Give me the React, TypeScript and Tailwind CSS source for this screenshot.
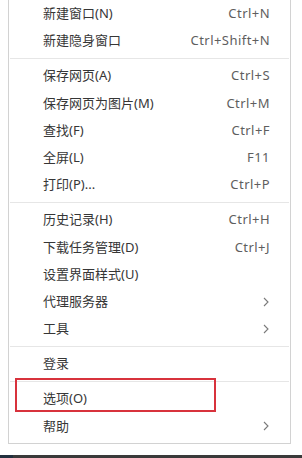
import React from "react";

type Item =
  | { type: "item"; label: string; shortcut?: string; sub?: boolean }
  | { type: "sep" };

const items: Item[] = [
  { type: "item", label: "新建窗口(N)", shortcut: "Ctrl+N" },
  { type: "item", label: "新建隐身窗口", shortcut: "Ctrl+Shift+N" },
  { type: "sep" },
  { type: "item", label: "保存网页(A)", shortcut: "Ctrl+S" },
  { type: "item", label: "保存网页为图片(M)", shortcut: "Ctrl+M" },
  { type: "item", label: "查找(F)", shortcut: "Ctrl+F" },
  { type: "item", label: "全屏(L)", shortcut: "F11" },
  { type: "item", label: "打印(P)...", shortcut: "Ctrl+P" },
  { type: "sep" },
  { type: "item", label: "历史记录(H)", shortcut: "Ctrl+H" },
  { type: "item", label: "下载任务管理(D)", shortcut: "Ctrl+J" },
  { type: "item", label: "设置界面样式(U)" },
  { type: "item", label: "代理服务器", sub: true },
  { type: "item", label: "工具", sub: true },
  { type: "sep" },
  { type: "item", label: "登录" },
  { type: "sep" },
  { type: "item", label: "选项(O)" },
  { type: "item", label: "帮助", sub: true },
];

function Chevron() {
  return (
    <svg width="6" height="10" viewBox="0 0 6 10" className="mr-[1px]">
      <path d="M1 1 L5 5 L1 9" fill="none" stroke="#7a7a7a" strokeWidth="1.1" />
    </svg>
  );
}

export default function App() {
  return (
    <div
      className="relative w-[302px] h-[458px] bg-white flex flex-col overflow-hidden"
      style={{ fontFamily: '"Noto Sans", "Noto Sans CJK SC", sans-serif' }}
    >
      <div className="ml-[8px] w-[283px] border-x border-b border-[#d2d2d2] pb-[3px]">
        {items.map((it, i) =>
          it.type === "sep" ? (
            <div key={i} className="h-[7.75px] flex items-center mx-[1px]">
              <div className="h-px w-full bg-[#e6e6e6]" />
            </div>
          ) : (
            <div
              key={i}
              className="h-[27.25px] flex items-center justify-between pl-[34px] pr-[20px] text-[13px] leading-none"
            >
              <span className="text-[#363636]">{it.label}</span>
              {it.shortcut && (
                <span className="text-[#5e5e5e] tracking-[0.45px]">{it.shortcut}</span>
              )}
              {it.sub && <Chevron />}
            </div>
          )
        )}
      </div>
      <div className="flex-1" />
      <div className="h-[3px] flex bg-[#3a3a3a]">
        <div className="w-[13px] bg-[#22303e]" />
      </div>
      <div className="absolute left-[15px] top-[378px] w-[201px] h-[34px] border-2 border-[#d8323c]" />
    </div>
  );
}
